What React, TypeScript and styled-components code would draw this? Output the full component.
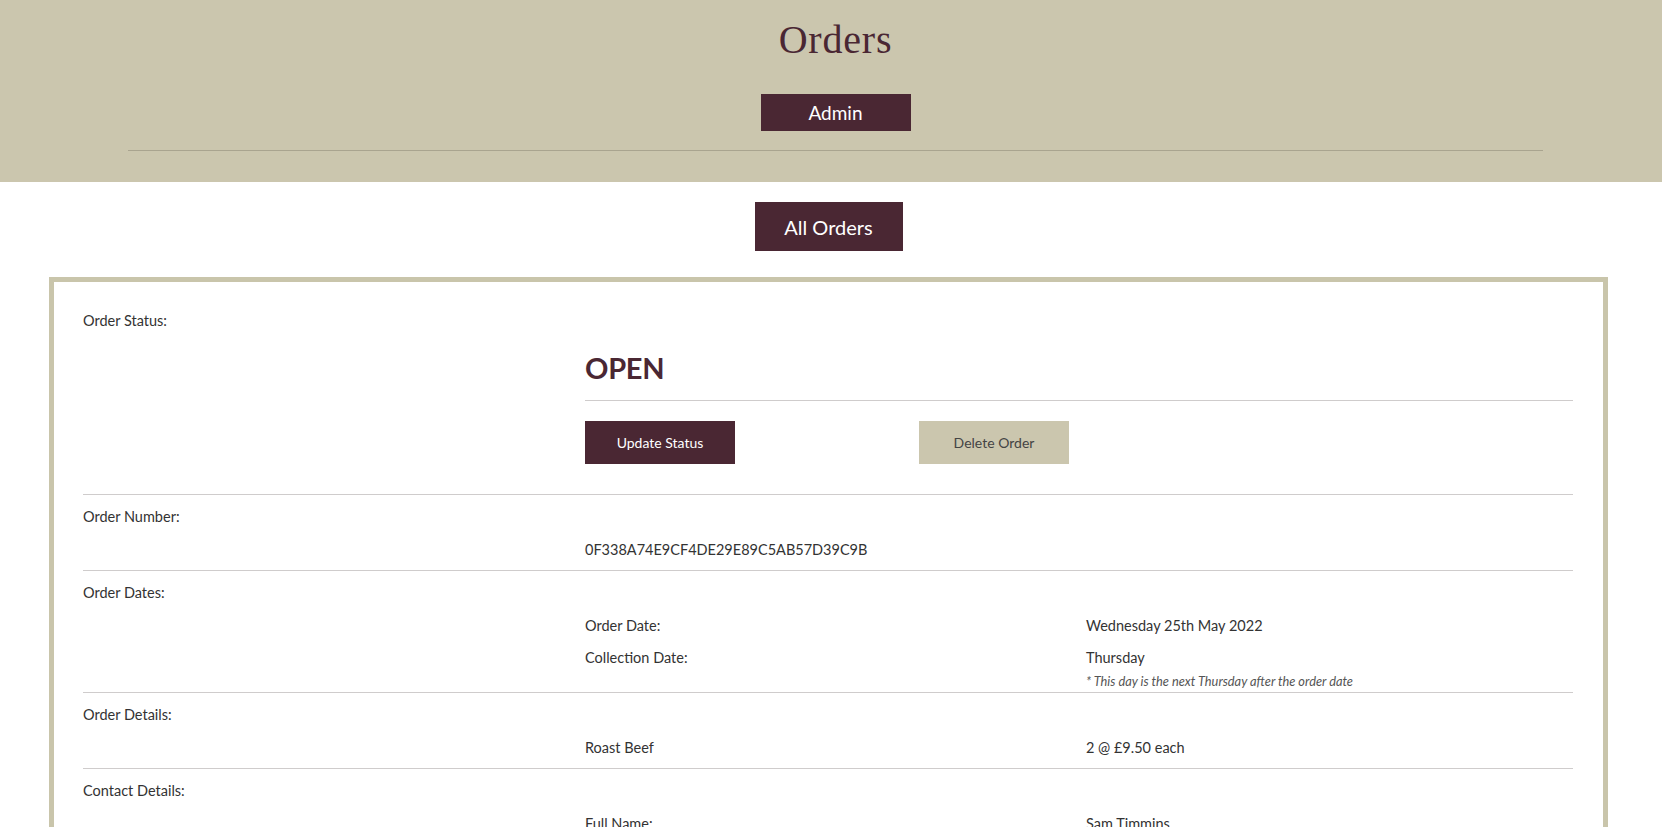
import React from 'react';
import styled, { createGlobalStyle } from 'styled-components';

const GlobalStyle = createGlobalStyle`
  body {
    margin: 0;
    background: #fff;
    font-family: Lato, "Liberation Sans", sans-serif;
    color: #333;
  }
`;

const Header = styled.header`
  background: #cbc6ae;
  height: 182px;
  box-sizing: border-box;
  padding-top: 14px;
`;

const HeaderInner = styled.div`
  width: 1415px;
  margin-left: 128px;
  display: flex;
  flex-direction: column;
  align-items: center;
  border-bottom: 1px solid #a9a48f;
  padding-bottom: 19px;
`;

const Title = styled.h1`
  margin: 0;
  font-family: "Liberation Serif", "DejaVu Serif", serif;
  font-weight: 400;
  font-size: 40px;
  line-height: 52px;
  color: #4a2733;
  letter-spacing: 0.8px;
`;

const DarkButton = styled.button<{ $w: number; $h: number; $size: number }>`
  width: ${p => p.$w}px;
  height: ${p => p.$h}px;
  background: #4a2733;
  color: #fff;
  border: none;
  font-family: Lato, "Liberation Sans", sans-serif;
  font-size: ${p => p.$size}px;
  cursor: pointer;
`;

const AdminButton = styled(DarkButton)`
  margin-top: 28px;
`;

const Main = styled.main`
  width: 1559px;
  margin-left: 49px;
  display: flex;
  flex-direction: column;
  align-items: center;
  padding-top: 20px;
`;

const Card = styled.section`
  margin-top: 26px;
  width: 100%;
  box-sizing: border-box;
  border: 5px solid #c9c5ab;
  padding: 17px 30px 30px 29px;
`;

const Section = styled.div<{ $last?: boolean }>`
  display: grid;
  grid-template-columns: 502px 501px 1fr;
  row-gap: 8px;
  padding: 10px 0 8px;
  border-bottom: ${p => (p.$last ? 'none' : '1px solid #cfcccc')};
`;

const Label = styled.div`
  grid-column: 1 / -1;
  font-size: 14.5px;
  line-height: 24px;
  color: #333;
  margin-bottom: 1px;
`;

const Cell = styled.div<{ $col: number }>`
  grid-column: ${p => p.$col};
  font-size: 14.5px;
  line-height: 24px;
  color: #333;
`;

const Wide = styled.div`
  grid-column: 2 / -1;
`;

const Status = styled.div`
  margin-top: 8px;
  font-size: 29px;
  line-height: 36px;
  font-weight: 700;
  color: #4a2733;
  letter-spacing: -0.3px;
  padding-bottom: 14px;
  border-bottom: 1px solid #cfcccc;
`;

const ButtonRow = styled.div`
  display: flex;
  gap: 184px;
  margin-top: 20px;
  margin-bottom: 22px;
`;

const LightButton = styled.button`
  width: 150px;
  height: 43px;
  background: #cbc6ae;
  color: #444;
  border: none;
  font-family: Lato, "Liberation Sans", sans-serif;
  font-size: 14px;
  cursor: pointer;
`;

const Note = styled.div`
  margin-top: -5px;
  margin-bottom: -5px;
  font-size: 12.8px;
  line-height: 16px;
  font-style: italic;
  color: #555;
`;

const App = () => {
  return (
    <React.Fragment>
      <GlobalStyle />
      <Header>
        <HeaderInner>
          <Title>Orders</Title>
          <AdminButton $w={150} $h={37} $size={19}>Admin</AdminButton>
        </HeaderInner>
      </Header>
      <Main>
        <DarkButton $w={148} $h={49} $size={20}>All Orders</DarkButton>
        <Card>
          <Section>
            <Label>Order Status:</Label>
            <Wide>
              <Status>OPEN</Status>
              <ButtonRow>
                <DarkButton $w={150} $h={43} $size={14}>Update Status</DarkButton>
                <LightButton>Delete Order</LightButton>
              </ButtonRow>
            </Wide>
          </Section>
          <Section>
            <Label>Order Number:</Label>
            <Cell $col={2}>0F338A74E9CF4DE29E89C5AB57D39C9B</Cell>
          </Section>
          <Section>
            <Label>Order Dates:</Label>
            <Cell $col={2}>Order Date:</Cell>
            <Cell $col={3}>Wednesday 25th May 2022</Cell>
            <Cell $col={2}>Collection Date:</Cell>
            <Cell $col={3}>Thursday</Cell>
            <Cell $col={3}>
              <Note>* This day is the next Thursday after the order date</Note>
            </Cell>
          </Section>
          <Section>
            <Label>Order Details:</Label>
            <Cell $col={2}>Roast Beef</Cell>
            <Cell $col={3}>2 @ £9.50 each</Cell>
          </Section>
          <Section $last>
            <Label>Contact Details:</Label>
            <Cell $col={2}>Full Name:</Cell>
            <Cell $col={3}>Sam Timmins</Cell>
            <Cell $col={2}>Email:</Cell>
            <Cell $col={3}>sam.timmins@example.com</Cell>
            <Cell $col={2}>Phone:</Cell>
            <Cell $col={3}>07700 900123</Cell>
          </Section>
        </Card>
      </Main>
    </React.Fragment>
  );
};

export default App;
